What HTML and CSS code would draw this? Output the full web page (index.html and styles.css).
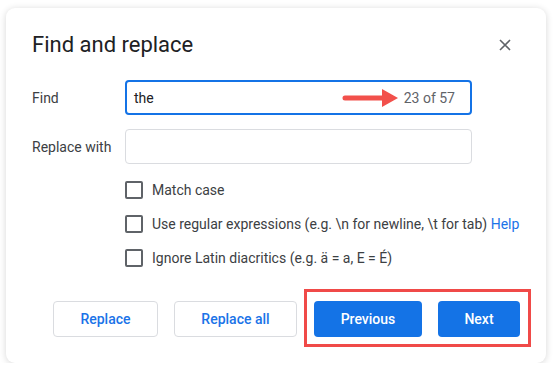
FILE: index.html
```html
<!DOCTYPE html>
<html lang="en">
<head>
<meta charset="UTF-8">
<title>Find and replace</title>
<link rel="stylesheet" href="styles.css">
</head>
<body>
<div class="dialog">
    <div class="dialog-head">
        <h1 class="title">Find and replace</h1>
        <button type="button" class="close" aria-label="Close">
            <svg width="12" height="12" viewBox="0 0 12 12"><path d="M1 1L11 11M11 1L1 11" stroke="#5f6368" stroke-width="1.6" fill="none"/></svg>
        </button>
    </div>

    <div class="fields">
        <label class="field-label" for="find">Find</label>
        <div class="textbox textbox-active" id="find">
            <span class="query">the</span>
            <svg class="arrow" width="58" height="22" viewBox="0 0 58 22"><path d="M3 8.5H40V2L56 11L40 20V13.5H3A2.5 2.5 0 0 1 3 8.5Z" fill="#f2504b"/></svg>
            <span class="count">23 of 57</span>
        </div>

        <label class="field-label" for="replace">Replace with</label>
        <div class="textbox" id="replace"></div>
    </div>

    <div class="options">
        <label class="option"><span class="box"></span>Match case</label>
        <label class="option"><span class="box"></span>Use regular expressions (e.g. \n for newline, \t for tab) <a class="help" href="#">Help</a></label>
        <label class="option"><span class="box"></span>Ignore Latin diacritics (e.g. ä = a, E = É)</label>
    </div>

    <div class="actions">
        <button type="button" class="btn btn-outline btn-replace">Replace</button>
        <button type="button" class="btn btn-outline btn-replace-all">Replace all</button>
        <div class="highlight">
            <button type="button" class="btn btn-primary btn-prev">Previous</button>
            <button type="button" class="btn btn-primary btn-next">Next</button>
        </div>
    </div>
</div>
</body>
</html>
```

FILE: styles.css
```css
body {
  margin: 0;
  background: #fff;
  font-family: Roboto, "Liberation Sans", sans-serif;
}
.dialog {
  width: 540px;
  height: 355px;
  margin: 8px 0 0 6px;
  padding: 23px 15px 0 26px;
  box-sizing: border-box;
  background: #fff;
  border-radius: 9px;
  box-shadow: 0 1px 7px rgba(0, 0, 0, 0.16);
}
.dialog-head {
  display: flex;
  align-items: center;
  justify-content: space-between;
  height: 28px;
}
.title {
  margin: 0;
  font-size: 22px;
  font-weight: 400;
  color: #202124;
  line-height: 28px;
}
.close {
  border: none;
  background: none;
  padding: 0;
  margin-right: 20px;
  width: 12px;
  height: 12px;
  display: flex;
}
.fields {
  display: grid;
  grid-template-columns: 93px 347px;
  grid-auto-rows: 35px;
  row-gap: 14px;
  margin-top: 21px;
  align-items: center;
}
.field-label {
  font-size: 14px;
  color: #3c4043;
}
.textbox {
  height: 35px;
  box-sizing: border-box;
  border: 1px solid #dadce0;
  border-radius: 4px;
  display: flex;
  align-items: center;
  padding: 0 15px 0 8px;
  font-size: 14px;
}
.textbox-active {
  border: 2px solid #1473e6;
  padding-left: 7px;
}
.query {
  color: #202124;
  flex: 1;
}
.arrow {
  margin-right: 4px;
}
.count {
  color: #5f6368;
}
.options {
  margin: 17px 0 0 93px;
  display: flex;
  flex-direction: column;
  gap: 16px;
}
.option {
  display: flex;
  align-items: center;
  height: 18px;
  font-size: 14px;
  color: #3c4043;
  white-space: pre;
}
.box {
  width: 18px;
  height: 18px;
  box-sizing: border-box;
  border: 2px solid #5f6368;
  border-radius: 2px;
  margin-right: 9px;
}
.help {
  color: #1a73e8;
  text-decoration: none;
}
.actions {
  display: flex;
  align-items: flex-start;
  justify-content: flex-end;
  margin-top: 22px;
}
.btn {
  height: 36px;
  box-sizing: border-box;
  border-radius: 4px;
  font-family: Roboto, "Liberation Sans", sans-serif;
  font-size: 14px;
  font-weight: 500;
  padding: 0;
  cursor: pointer;
}
.btn-outline {
  background: #fff;
  border: 1px solid #dadce0;
  color: #1a73e8;
  margin-top: 12px;
}
.btn-replace {
  width: 105px;
  margin-right: 16px;
}
.btn-replace-all {
  width: 123px;
  margin-right: 7px;
}
.highlight {
  display: flex;
  gap: 16px;
  border: 3px solid #f04a48;
  padding: 9px 8px 7px 7px;
}
.btn-primary {
  background: #1473e6;
  border: none;
  color: #fff;
}
.btn-prev {
  width: 108px;
}
.btn-next {
  width: 82px;
}
```
